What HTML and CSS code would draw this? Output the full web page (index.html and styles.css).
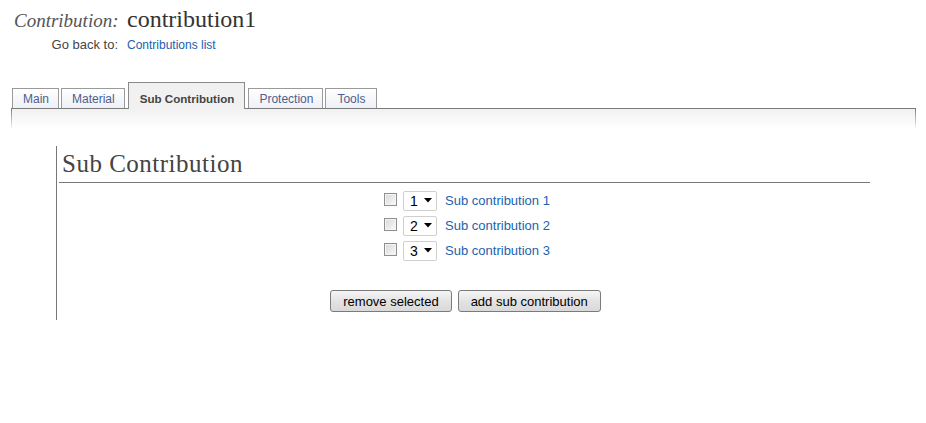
FILE: index.html
```html
<!DOCTYPE html>
<html>
<head>
<meta charset="utf-8">
<link rel="stylesheet" href="styles.css">
</head>
<body>
<div class="header">
  <div class="label label-title">Contribution:</div>
  <div class="title">contribution1</div>
  <div class="label label-back">Go back to:</div>
  <a class="link back-link" href="#">Contributions list</a>
</div>

<ul class="tabs">
  <li class="tab">Main</li>
  <li class="tab">Material</li>
  <li class="tab tab-active">Sub Contribution</li>
  <li class="tab">Protection</li>
  <li class="tab tab-last">Tools</li>
</ul>
<div class="tab-box"></div>

<div class="section">
  <h2 class="section-title">Sub Contribution</h2>
  <div class="rows">
    <div class="row">
      <input type="checkbox" class="check">
      <div class="select"><span class="select-val">1</span><svg class="arrow" width="8" height="5" viewBox="0 0 8 5"><path d="M0 0H8L4 4.5Z" fill="#000"/></svg></div>
      <a class="link row-link" href="#">Sub contribution 1</a>
    </div>
    <div class="row">
      <input type="checkbox" class="check">
      <div class="select"><span class="select-val">2</span><svg class="arrow" width="8" height="5" viewBox="0 0 8 5"><path d="M0 0H8L4 4.5Z" fill="#000"/></svg></div>
      <a class="link row-link" href="#">Sub contribution 2</a>
    </div>
    <div class="row">
      <input type="checkbox" class="check">
      <div class="select"><span class="select-val">3</span><svg class="arrow" width="8" height="5" viewBox="0 0 8 5"><path d="M0 0H8L4 4.5Z" fill="#000"/></svg></div>
      <a class="link row-link" href="#">Sub contribution 3</a>
    </div>
  </div>
  <div class="buttons">
    <button class="btn">remove selected</button>
    <button class="btn">add sub contribution</button>
  </div>
</div>
</body>
</html>
```

FILE: styles.css
```css
html, body {
  margin: 0;
  padding: 0;
  background: #fff;
}
body {
  font-family: "Liberation Sans", Arial, sans-serif;
  font-size: 12px;
  color: #444;
}
.header {
  display: grid;
  grid-template-columns: 104px auto;
  column-gap: 9px;
  row-gap: 0;
  padding: 5px 0 0 14px;
  align-items: baseline;
}
.label {
  text-align: right;
  color: #444;
}
.label-title {
  font-family: "Liberation Serif", "Times New Roman", serif;
  font-style: italic;
  font-size: 19px;
  color: #555;
}
.title {
  font-family: "Liberation Serif", "Times New Roman", serif;
  font-size: 24px;
  color: #333;
  line-height: 28px;
}
.label-back {
  font-size: 13px;
  line-height: 24px;
}
.link {
  color: #2262ae;
  text-decoration: none;
  font-size: 12px;
}
.row-link {
  font-size: 13px;
}
.back-link {
  justify-self: start;
}
.tabs {
  list-style: none;
  margin: 25px 0 0 0;
  padding: 0 0 0 12px;
  display: flex;
  align-items: flex-end;
  gap: 2px;
  position: relative;
  z-index: 1;
}
.tab {
  height: 19px;
  line-height: 20px;
  padding: 0 9px 0 10px;
  border: 1px solid #9a9a9a;
  border-bottom: none;
  background: linear-gradient(#ffffff, #eef0f6);
  color: #4d5f8c;
  font-size: 12px;
}
.tab-last {
  padding: 0 11px 0 11px;
}
.tab-active {
  height: 26px;
  line-height: 32px;
  padding: 0 10px 0 11px;
  margin: 0 1px -1px 1px;
  background: #f1f1f1;
  border-color: #8a8a8a;
  color: #444;
  font-weight: bold;
  font-size: 11.6px;
}
.tab-box {
  margin: 0 10px 0 11px;
  height: 20px;
  border: 1px solid #7a7a7a;
  border-bottom: none;
  border-image: linear-gradient(#777, #fff) 1;
  background: linear-gradient(#f1f1f1, #ffffff);
}
.section {
  margin: 17px 56px 0 56px;
  border-left: 1px solid #777;
  padding: 0 0 8px 2px;
}
.section-title {
  margin: 0;
  padding: 5px 0 6px 3px;
  font-family: "Liberation Serif", "Times New Roman", serif;
  font-weight: normal;
  font-size: 25px;
  letter-spacing: 0.5px;
  line-height: 25px;
  color: #444;
  border-bottom: 1px solid #777;
}
.rows {
  display: flex;
  flex-direction: column;
  align-items: center;
  padding-top: 5px;
  padding-left: 5px;
}
.row {
  display: flex;
  align-items: center;
  height: 25px;
}
.check {
  appearance: none;
  -webkit-appearance: none;
  width: 13px;
  height: 13px;
  margin: 0 6px 2px 0;
  border: 1px solid #8f8f8f;
  background: linear-gradient(135deg, #d8d8d8, #fafafa);
  box-shadow: inset 0 0 0 1px #f4f4f4;
}
.select {
  display: flex;
  align-items: center;
  justify-content: space-between;
  box-sizing: border-box;
  width: 34px;
  height: 20px;
  padding: 0 4px 0 6px;
  margin-right: 8px;
  border: 1px solid #cfcfcf;
  border-radius: 2px;
  font-size: 14px;
  color: #000;
}
.arrow {
  display: block;
}
.buttons {
  display: flex;
  justify-content: center;
  gap: 6px;
  margin-top: 27px;
  padding-left: 2px;
}
.btn {
  font-family: "Liberation Sans", Arial, sans-serif;
  font-size: 13px;
  color: #000;
  height: 22px;
  padding: 0 12px;
  border: 1px solid #7b7b7b;
  border-radius: 3px;
  background: linear-gradient(#f6f6f6, #e3e3e3 50%, #d9d9d9);
}
```
